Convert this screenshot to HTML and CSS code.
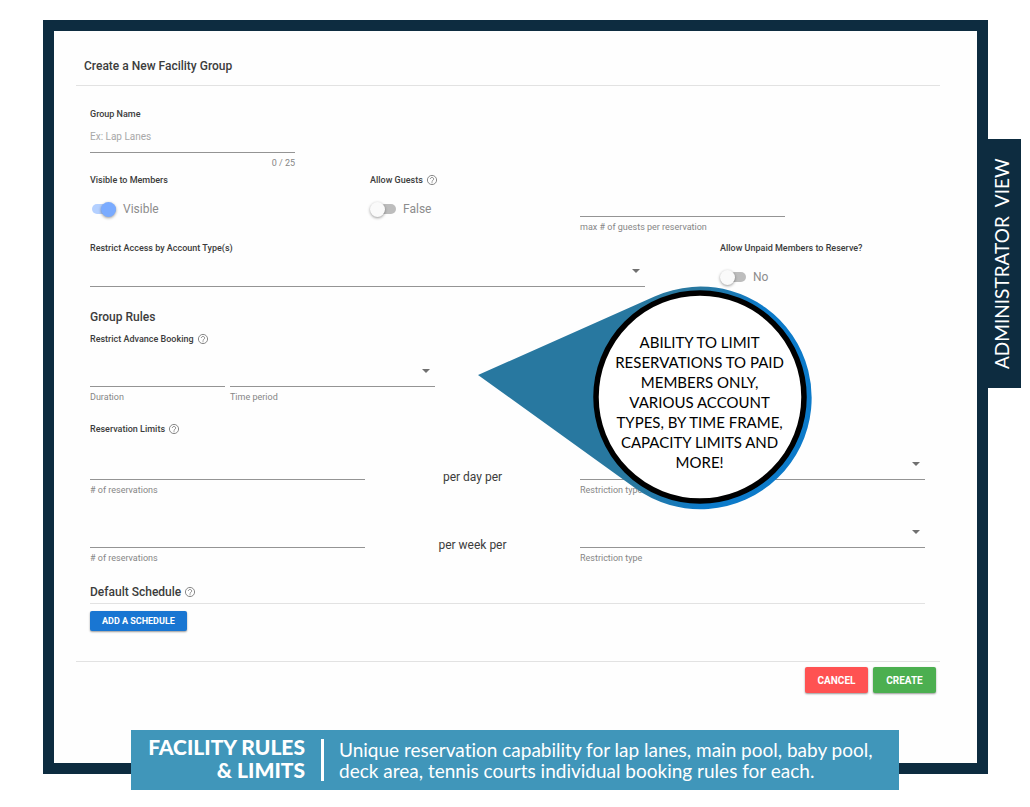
FILE: index.html
```html
<!DOCTYPE html>
<html lang="en">
<head>
  <meta charset="UTF-8">
  <meta name="viewport" content="width=device-width, initial-scale=1.0">
  <title>Facility Rules &amp; Limits</title>
  <link rel="stylesheet" href="styles.css">
</head>
<body>
  <svg class="defs" width="0" height="0" aria-hidden="true">
    <symbol id="help" viewBox="0 0 24 24">
      <circle cx="12" cy="12" r="9.2" fill="none" stroke="currentColor" stroke-width="1.7"/>
      <path d="M8.8 10a3.2 3.2 0 1 1 5.4 2.3c-1.2 1.1-2.2 1.5-2.2 3" fill="none" stroke="currentColor" stroke-width="1.7"/>
      <circle cx="12" cy="17.6" r="1.1" fill="currentColor"/>
    </symbol>
  </svg>

  <main class="frame">
    <form class="panel" onsubmit="return false">
      <h1>Create a New Facility Group</h1>

      <div class="form-body">
        <div class="row">
          <div class="field span-3">
            <label class="label" for="group_name">Group Name</label>
            <input class="control" type="text" id="group_name" maxlength="25" placeholder="Ex: Lap Lanes">
            <span class="hint counter">0 / 25</span>
          </div>
        </div>

        <div class="row row-switch">
          <div class="field span-4">
            <span class="label">Visible to Members</span>
            <label class="switch"><input type="checkbox" checked>Visible</label>
          </div>
          <div class="field span-3">
            <span class="label">Allow Guests <svg class="help"><use href="#help"/></svg></span>
            <label class="switch"><input type="checkbox">False</label>
          </div>
          <div class="field span-3 max-guests">
            <input class="control" type="text" id="max_guests">
            <label class="hint" for="max_guests">max # of guests per reservation</label>
          </div>
        </div>

        <div class="row">
          <div class="field span-8">
            <label class="label" for="account_types">Restrict Access by Account Type(s)</label>
            <div class="select"><select class="control" id="account_types"><option></option></select></div>
          </div>
          <div class="field span-3 from-10">
            <span class="label">Allow Unpaid Members to Reserve?</span>
            <label class="switch"><input type="checkbox">No</label>
          </div>
        </div>

        <h2 class="rules-title">Group Rules</h2>
        <div class="label rules-label">Restrict Advance Booking <svg class="help"><use href="#help"/></svg></div>
        <div class="row row-booking">
          <div class="field span-2">
            <input class="control" type="text" id="duration">
            <label class="hint" for="duration">Duration</label>
          </div>
          <div class="field span-3">
            <div class="select"><select class="control" id="time_period"><option></option></select></div>
            <label class="hint" for="time_period">Time period</label>
          </div>
        </div>

        <div class="label limits-label">Reservation Limits <svg class="help"><use href="#help"/></svg></div>
        <div class="row row-limit">
          <div class="field span-4">
            <input class="control" type="text" id="per_day">
            <label class="hint" for="per_day"># of reservations</label>
          </div>
          <div class="per span-3">per day per</div>
          <div class="field span-5">
            <div class="select"><select class="control" id="day_type"><option></option></select></div>
            <label class="hint" for="day_type">Restriction type</label>
          </div>
        </div>
        <div class="row row-limit">
          <div class="field span-4">
            <input class="control" type="text" id="per_week">
            <label class="hint" for="per_week"># of reservations</label>
          </div>
          <div class="per span-3">per week per</div>
          <div class="field span-5">
            <div class="select"><select class="control" id="week_type"><option></option></select></div>
            <label class="hint" for="week_type">Restriction type</label>
          </div>
        </div>

        <h2 class="schedule-title">Default Schedule <svg class="help"><use href="#help"/></svg></h2>
        <button type="button" class="btn btn-add">ADD A SCHEDULE</button>
      </div>

      <div class="actions">
        <button type="button" class="btn btn-cancel">CANCEL</button>
        <button type="submit" class="btn btn-create">CREATE</button>
      </div>
    </form>

    <!-- Callout bubble over the form -->
    <div class="callout">
      <svg viewBox="0 0 334 224" width="334" height="224" aria-hidden="true">
        <defs>
          <linearGradient id="rim" gradientUnits="userSpaceOnUse" x1="165" y1="200" x2="225" y2="218">
            <stop offset="0" stop-color="#2878a0"/>
            <stop offset="1" stop-color="#0c7ac9"/>
          </linearGradient>
        </defs>
        <path d="M0 89 L176.500 10.500 A111.300 111.300 0 1 1 157 202 Z" fill="url(#rim)"/>
        <circle cx="222" cy="111" r="104" fill="#fff" stroke="#000" stroke-width="5.500"/>
      </svg>
      <p>ABILITY TO LIMIT RESERVATIONS TO PAID MEMBERS ONLY, VARIOUS ACCOUNT TYPES, BY TIME FRAME, CAPACITY LIMITS AND MORE!</p>
    </div>

    <div class="side-tab">ADMINISTRATOR &nbsp;VIEW</div>

    <div class="banner">
      <strong>FACILITY RULES<br>&amp; LIMITS</strong>
      <p>Unique reservation capability for lap lanes, main pool, baby pool,<br>deck area, tennis courts individual booking rules for each.</p>
    </div>
  </main>
</body>
</html>
```
FILE: styles.css
```css
* {
  box-sizing: border-box;
}
body {
  margin: 0;
  padding: 20px 42px 33px 43px;
  background-color: #ffffff;
  font-family: Roboto, Arial, sans-serif;
  color: #3c3c3c;
}
.defs {
  position: absolute;
}
.frame {
  position: relative;
  border: 11px solid #0d2c40;
  background-color: #fefefe;
}
.panel {
  padding: 0 37px 70px 22px;
}
h1, h2 {
  margin: 0;
  font-size: 12px;
  font-weight: 500;
  line-height: 20px;
}
h1 {
  padding: 25px 8px 9px;
  border-bottom: 1px solid #e2e2e2;
}
.form-body {
  padding: 19px 15px 30px 14px;
}

/* 12 column grid */
.row {
  display: grid;
  grid-template-columns: repeat(12, 1fr);
  column-gap: 5px;
}
.span-2 { grid-column: span 2; }
.span-3 { grid-column: span 3; }
.span-4 { grid-column: span 4; }
.span-5 { grid-column: span 5; }
.span-8 { grid-column: span 8; }
.from-10 { grid-column: 10 / span 3; }
.field {
  display: flex;
  flex-direction: column;
  min-width: 0;
}
.label {
  display: flex;
  align-items: center;
  gap: 3px;
  height: 16px;
  padding-top: 2px;
  font-size: 9px;
  font-weight: 500;
  white-space: nowrap;
}
.help {
  width: 12px;
  height: 12px;
  color: #757575;
}
.control {
  display: block;
  width: 100%;
  height: 32px;
  padding: 0;
  border: 0;
  border-bottom: 1px solid #949494;
  border-radius: 0;
  background: transparent;
  font: 10px Roboto, Arial, sans-serif;
  color: #3c3c3c;
  appearance: none;
  outline: none;
}
.control::placeholder {
  color: #a8a8a8;
}
.hint {
  height: 18px;
  font-size: 9px;
  line-height: 20px;
  color: #868686;
}
.counter {
  text-align: right;
}
.select {
  position: relative;
}
.select::after {
  content: "";
  position: absolute;
  right: 5px;
  top: 14px;
  border: 4px solid transparent;
  border-top-color: #707070;
  border-bottom: 0;
  pointer-events: none;
}

/* Switches */
.switch {
  display: flex;
  align-items: center;
  height: 44px;
  font-size: 12px;
  color: #8c8c8c;
}
.switch input {
  position: relative;
  width: 24px;
  height: 10px;
  margin: 0 7px 0 2px;
  border-radius: 5px;
  background-color: #bdbdbd;
  appearance: none;
}
.switch input::before {
  content: "";
  position: absolute;
  left: -2px;
  top: -2px;
  width: 15px;
  height: 15px;
  border-radius: 50%;
  background-color: #fafafa;
  box-shadow: 0 1px 3px rgba(0, 0, 0, 0.4);
}
.switch input:checked {
  background-color: #b4d0ff;
}
.switch input:checked::before {
  left: 9px;
  background-color: #7aabff;
}
.row-switch {
  margin-bottom: 4px;
}
.max-guests {
  padding-top: 14px;
}

/* Group rules */
.rules-title {
  margin-top: 8px;
}
.rules-label {
  margin-top: 3px;
}
.row-booking {
  margin-top: 9px;
}
.limits-label {
  margin-top: 15px;
}
.row-limit {
  margin-top: 12px;
}
.row-limit + .row-limit {
  margin-top: 18px;
}
.per {
  padding-top: 20px;
  font-size: 12px;
  line-height: 18px;
  text-align: center;
}
.schedule-title {
  display: flex;
  align-items: center;
  gap: 3px;
  margin-top: 16px;
  padding-bottom: 1px;
  border-bottom: 1px solid #e2e2e2;
}

/* Buttons */
.btn {
  border: 0;
  border-radius: 2px;
  box-shadow: 0 1px 2px rgba(0, 0, 0, 0.4);
  color: #ffffff;
  font: 700 10px Roboto, Arial, sans-serif;
}
.btn-add {
  display: block;
  height: 20px;
  margin-top: 7px;
  padding: 0 12px;
  background-color: #1976d2;
  font-size: 9px;
}
.actions {
  display: flex;
  justify-content: flex-end;
  gap: 5px;
  padding: 5px 4px 0;
  border-top: 1px solid #e2e2e2;
}
.btn-cancel, .btn-create {
  width: 63px;
  height: 26px;
}
.btn-cancel {
  background-color: #ff5252;
}
.btn-create {
  background-color: #4caf50;
}

/* Overlays on the frame */
.callout {
  position: absolute;
  left: calc(46% - 1px);
  top: 255px;
  width: 334px;
  height: 224px;
}
.callout svg {
  display: block;
}
.callout p {
  position: absolute;
  left: 132px;
  top: 46px;
  width: 180px;
  margin: 0;
  font-family: Lato, sans-serif;
  font-size: 15px;
  line-height: 20px;
  text-align: center;
  color: #000000;
}
.side-tab {
  position: absolute;
  left: 100%;
  top: 108px;
  width: 44px;
  height: 249px;
  padding-right: 7px;
  background-color: #0d2c40;
  color: #ffffff;
  font-family: Lato, sans-serif;
  font-size: 19px;
  line-height: 36px;
  text-align: center;
  white-space: nowrap;
  writing-mode: vertical-rl;
  transform: rotate(180deg);
}
.banner {
  position: absolute;
  left: 77px;
  right: 78px;
  bottom: -27px;
  display: flex;
  align-items: center;
  height: 60px;
  background-color: #4096ba;
  color: #ffffff;
  font-family: Lato, sans-serif;
  font-variant-ligatures: none;
}
.banner strong {
  width: 174px;
  padding-bottom: 4px;
  font-size: 21px;
  font-weight: 900;
  line-height: 23px;
  text-align: right;
  white-space: nowrap;
}
.banner p {
  margin: 0 0 0 16px;
  padding-left: 15px;
  border-left: 3px solid #ffffff;
  font-size: 19px;
  line-height: 21px;
  white-space: nowrap;
}
```
